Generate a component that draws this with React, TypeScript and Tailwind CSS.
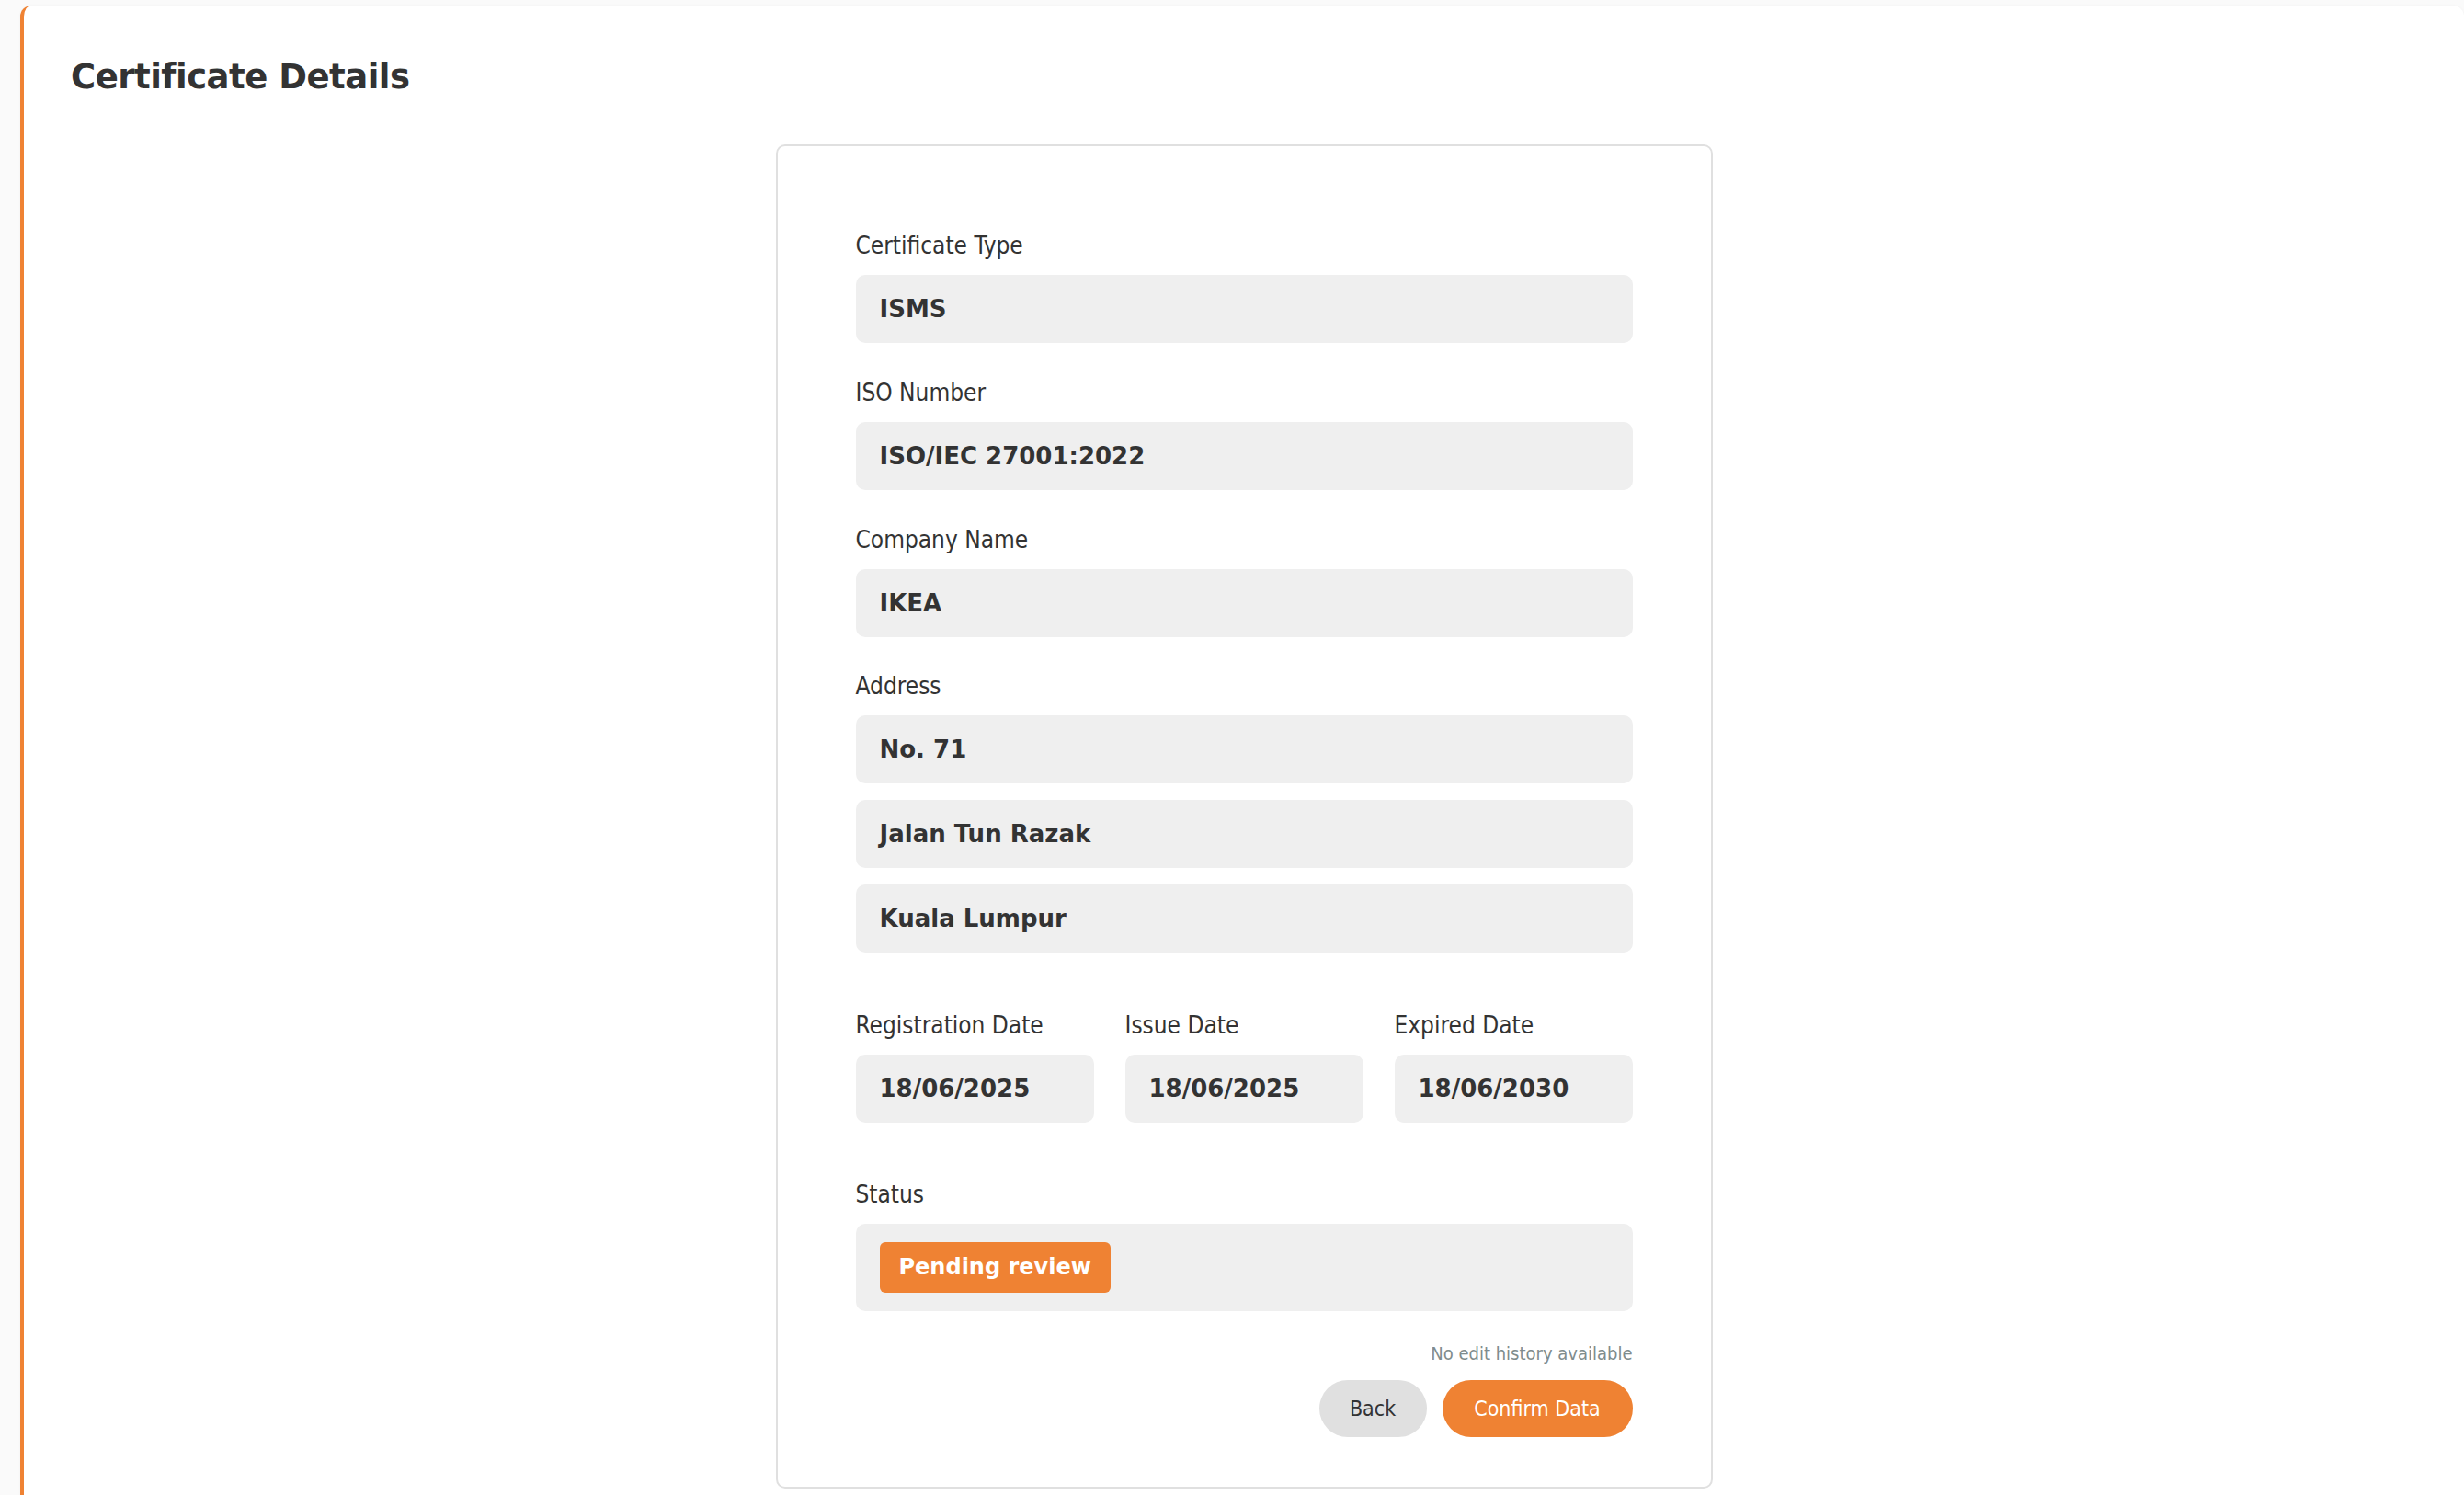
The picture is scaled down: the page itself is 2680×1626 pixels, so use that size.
import React from 'react';

const labelFont = "font-['DejaVu_Sans_Condensed','Liberation_Sans',Arial,sans-serif]";
const boldFont = "font-['DejaVu_Sans',Verdana,sans-serif] font-bold";

const FieldLabel: React.FC<{ children: React.ReactNode }> = ({ children }) => (
    <div className={`${labelFont} text-[26px] leading-[30px] mb-[17px] text-[#333]`}>{children}</div>
);

const ValueBox: React.FC<{ value: string }> = ({ value }) => (
    <div className={`h-[74px] rounded-[10px] bg-[#efefef] pl-[26px] flex items-center ${boldFont} text-[26px] text-[#333]`}>
        {value}
    </div>
);

const dates = [
    { label: 'Registration Date', value: '18/06/2025' },
    { label: 'Issue Date', value: '18/06/2025' },
    { label: 'Expired Date', value: '18/06/2030' },
];

const App: React.FC = () => {
    return (
        <div className="min-h-screen bg-[#fafafa] pl-[22px] pt-[6px] text-[#333]">
            <div className="min-h-[1620px] rounded-tl-xl rounded-tr-xl border-l-4 border-[#ef8233] bg-white pb-[40px] shadow-[0_0_3px_rgba(0,0,0,0.04)]">
                <div className="pl-[51px] pt-[56px]">
                    <h1 className={`${boldFont} text-[37px] leading-[44px] tracking-[-0.5px] text-[#333]`}>
                        Certificate Details
                    </h1>
                </div>

                <div className="mx-auto mt-[51px] w-[1019px] rounded-[10px] border-2 border-[#e0e0e0] bg-white px-[85px] pt-[93px] pb-[54px]">
                    <div className="mb-[39px]">
                        <FieldLabel>Certificate Type</FieldLabel>
                        <ValueBox value="ISMS" />
                    </div>
                    <div className="mb-[39px]">
                        <FieldLabel>ISO Number</FieldLabel>
                        <ValueBox value="ISO/IEC 27001:2022" />
                    </div>
                    <div className="mb-[38px]">
                        <FieldLabel>Company Name</FieldLabel>
                        <ValueBox value="IKEA" />
                    </div>
                    <div className="mb-[64px]">
                        <FieldLabel>Address</FieldLabel>
                        <div className="flex flex-col gap-[18px]">
                            <ValueBox value="No. 71" />
                            <ValueBox value="Jalan Tun Razak" />
                            <ValueBox value="Kuala Lumpur" />
                        </div>
                    </div>

                    <div className="mb-[63px] grid grid-cols-3 gap-[34px]">
                        {dates.map((d) => (
                            <div key={d.label}>
                                <FieldLabel>{d.label}</FieldLabel>
                                <ValueBox value={d.value} />
                            </div>
                        ))}
                    </div>

                    <div>
                        <FieldLabel>Status</FieldLabel>
                        <div className="flex h-[95px] items-center rounded-[10px] bg-[#efefef] pl-[26px]">
                            <span className={`rounded-[6px] bg-[#ef8233] px-[21px] py-[13px] ${boldFont} text-[24px] leading-[29px] text-white`}>
                                Pending review
                            </span>
                        </div>
                    </div>

                    <p className={`${labelFont} mt-[34px] text-right text-[20px] leading-[24px] text-[#7f8c8d]`}>
                        No edit history available
                    </p>

                    <div className="mt-[17px] flex justify-end gap-[17px]">
                        <button className={`${labelFont} h-[62px] w-[117px] rounded-full bg-[#e0e0e0] text-[23px] text-[#333]`}>
                            Back
                        </button>
                        <button className={`${labelFont} h-[62px] w-[207px] rounded-full bg-[#ef8233] text-[23px] text-white`}>
                            Confirm Data
                        </button>
                    </div>
                </div>
            </div>
        </div>
    );
};

export default App;
